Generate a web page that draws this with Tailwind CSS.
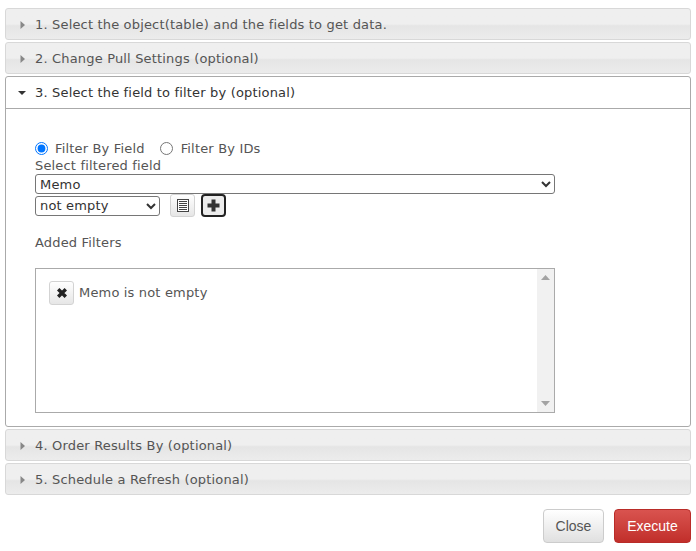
<!DOCTYPE html>
<html><head><meta charset="utf-8"><script src="https://cdn.jsdelivr.net/npm/@tailwindcss/browser@4"></script></head>
<body class="bg-white">
<div class="w-[696px] h-[551px] overflow-hidden pt-2 px-[5px] font-['DejaVu_Sans',sans-serif] text-[13px] text-[#555] tracking-[0.17px]">
<div class="flex flex-col gap-[2px]">
  <div class="h-8 pt-[1px] flex items-center pl-[14px] gap-[9px] border border-[#d8d8d8] rounded-[3px] bg-gradient-to-b from-[#efefef] from-50% via-[#e5e5e5] via-[56%] to-[#ececec]">
    <svg width="6" height="8" viewBox="0 0 6 8" class="shrink-0"><path d="M0.500 0l4.500 4-4.500 4z" fill="#888"/></svg><span>1. Select the object(table) and the fields to get data.</span>
  </div>
  <div class="h-8 pt-[1px] flex items-center pl-[14px] gap-[9px] border border-[#d8d8d8] rounded-[3px] bg-gradient-to-b from-[#efefef] from-50% via-[#e5e5e5] via-[56%] to-[#ececec]">
    <svg width="6" height="8" viewBox="0 0 6 8" class="shrink-0"><path d="M0.500 0l4.500 4-4.500 4z" fill="#888"/></svg><span>2. Change Pull Settings (optional)</span>
  </div>
  <div class="h-[351px] border border-[#aaa] rounded-[3px] bg-white">
    <div class="h-8 flex items-center pl-[12px] gap-[9px] border-b border-[#aaa] text-[#333]">
      <svg width="8" height="6" viewBox="0 0 8 6" class="shrink-0"><path d="M0 1h8L4 5z" fill="#333"/></svg><span>3. Select the field to filter by (optional)</span>
    </div>
    <div class="pl-[29px] pt-[31px]">
      <div class="flex items-center h-[17px]">
        <input type="radio" checked name="f" class="m-0 w-[13px] h-[13px] accent-[#0075ff]"><span class="ml-[7px]">Filter By Field</span>
        <input type="radio" name="f" class="m-0 ml-[15px] w-[13px] h-[13px]"><span class="ml-[8px]">Filter By IDs</span>
      </div>
      <div class="h-[17px] leading-[18px]">Select filtered field</div>
      <select class="block w-[520px] h-[20px] border border-[#767676] rounded-[3px] bg-white text-[13px] text-[#333] appearance-auto"><option>Memo</option></select>
      <div class="flex items-center mt-[1px] h-[21px]">
        <select class="w-[125px] h-[20px] border border-[#767676] rounded-[3px] bg-white text-[13px] text-[#333]"><option>not empty</option></select>
        <div class="ml-[10px] w-[25px] h-[23px] flex items-center justify-center border border-[#d3d3d3] rounded-[3px] bg-gradient-to-b from-white to-[#e6e6e6]">
          <svg width="12" height="13" viewBox="0 0 12 13" fill="none" shape-rendering="crispEdges"><rect x="0.500" y="0.500" width="11" height="12" fill="#fff" stroke="#444"/><path d="M2 2.500h8M2 4.500h8M2 6.500h8M2 8.500h8M2 10.500h8" stroke="#444"/></svg>
        </div>
        <div class="ml-[6px] w-[25px] h-[23px] flex items-center justify-center border-2 border-[#222] rounded-[4px] bg-[#ececec]">
          <svg width="13" height="13" viewBox="0 0 13 13"><path d="M4.500 0.500h4v4h4v4h-4v4h-4v-4h-4v-4h4z" fill="#333"/></svg>
        </div>
      </div>
      <div class="mt-[19px] h-[16px] leading-[16px]">Added Filters</div>
      <div class="mt-[17px] w-[520px] h-[145px] border border-[#aaa] flex">
        <div class="flex-1 pt-[12px] pl-[13px] flex items-start gap-[5px]">
          <div class="w-[25px] h-[24px] flex items-center justify-center border border-[#d3d3d3] rounded-[3px] bg-gradient-to-b from-white to-[#e6e6e6]">
            <svg width="12" height="12" viewBox="0 0 12 12"><path d="M2.200 2.200l7.600 7.600M9.800 2.200l-7.600 7.600" stroke="#222" stroke-width="3.400"/></svg>
          </div>
          <span class="mt-[2px]">Memo is not empty</span>
        </div>
        <div class="w-[17px] bg-[#f1f1f1] flex flex-col items-center justify-between py-[6px]">
          <svg width="9" height="5" viewBox="0 0 9 5"><path d="M4.500 0L9 5H0z" fill="#a3a3a3"/></svg>
          <svg width="9" height="5" viewBox="0 0 9 5"><path d="M0 0h9L4.500 5z" fill="#a3a3a3"/></svg>
        </div>
      </div>
    </div>
  </div>
  <div class="h-8 pt-[1px] flex items-center pl-[14px] gap-[9px] border border-[#d8d8d8] rounded-[3px] bg-gradient-to-b from-[#efefef] from-50% via-[#e5e5e5] via-[56%] to-[#ececec]">
    <svg width="6" height="8" viewBox="0 0 6 8" class="shrink-0"><path d="M0.500 0l4.500 4-4.500 4z" fill="#888"/></svg><span>4. Order Results By (optional)</span>
  </div>
  <div class="h-8 pt-[1px] flex items-center pl-[14px] gap-[9px] border border-[#d8d8d8] rounded-[3px] bg-gradient-to-b from-[#efefef] from-50% via-[#e5e5e5] via-[56%] to-[#ececec]">
    <svg width="6" height="8" viewBox="0 0 6 8" class="shrink-0"><path d="M0.500 0l4.500 4-4.500 4z" fill="#888"/></svg><span>5. Schedule a Refresh (optional)</span>
  </div>
</div>
<div class="flex justify-end gap-[10px] mt-[14px] font-['Liberation_Sans',sans-serif] text-[14px] tracking-normal">
  <div class="w-[61px] h-[34px] flex items-center justify-center border border-[#ccc] rounded-[4px] bg-gradient-to-b from-white to-[#e0e0e0] text-[#555]">Close</div>
  <div class="w-[77px] h-[34px] flex items-center justify-center border border-[#b92c28] rounded-[4px] bg-gradient-to-b from-[#d9534f] to-[#c12e2a] text-white">Execute</div>
</div>
</div>
</body></html>
